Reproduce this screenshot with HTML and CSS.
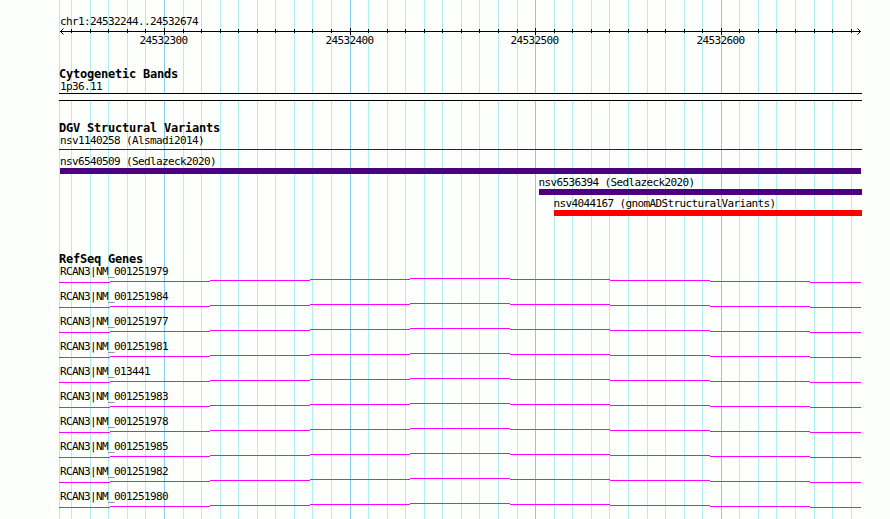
FILE: index.html
```
<!DOCTYPE html>
<html lang="en">
<head>
    <meta charset="UTF-8">
    <meta name="viewport" content="width=device-width, initial-scale=1.0">
    <title>chr1:24532244..24532674</title>
    <link rel="stylesheet" href="styles.css">
</head>
<body>

    <div class="panel">
        <svg class="grid" width="803" height="519" shape-rendering="crispEdges">
            <path class="minor" d="M.5 0v519M12.5 0v519M31.5 0v519M49.5 0v519M68.5 0v519M86.5 0v519M124.5 0v519M142.5 0v519M161.5 0v519M179.5 0v519M198.5 0v519M216.5 0v519M235.5 0v519M253.5 0v519M272.5 0v519M309.5 0v519M328.5 0v519M346.5 0v519M365.5 0v519M383.5 0v519M402.5 0v519M420.5 0v519M439.5 0v519M458.5 0v519M495.5 0v519M513.5 0v519M532.5 0v519M550.5 0v519M569.5 0v519M588.5 0v519M606.5 0v519M625.5 0v519M643.5 0v519M680.5 0v519M699.5 0v519M717.5 0v519M736.5 0v519M755.5 0v519M773.5 0v519M792.5 0v519"/>
            <path class="major" d="M105.5 0v519M291.5 0v519M476.5 0v519M662.5 0v519"/>
        </svg>

        <div class="ruler">
            <div class="label">chr1:24532244..24532674</div>
            <svg class="scale" width="803" height="20">
                <g shape-rendering="crispEdges">
                    <path d="M1 4.5h801"/>
                    <path d="M12.5 2v4M31.5 2v4M49.5 2v4M68.5 2v4M86.5 2v4M124.5 2v4M142.5 2v4M161.5 2v4M179.5 2v4M198.5 2v4M216.5 2v4M235.5 2v4M253.5 2v4M272.5 2v4M309.5 2v4M328.5 2v4M346.5 2v4M365.5 2v4M383.5 2v4M402.5 2v4M420.5 2v4M439.5 2v4M458.5 2v4M495.5 2v4M513.5 2v4M532.5 2v4M550.5 2v4M569.5 2v4M588.5 2v4M606.5 2v4M625.5 2v4M643.5 2v4M680.5 2v4M699.5 2v4M717.5 2v4M736.5 2v4M755.5 2v4M773.5 2v4M792.5 2v4"/>
                    <path d="M105.5 1v7M291.5 1v7M476.5 1v7M662.5 1v7"/>
                </g>
                <path d="M4.5 1.5l-3 3 3 3M798.5 1.5l3 3-3 3"/>
                <text x="80.5" y="17">24532300</text>
                <text x="266.5" y="17">24532400</text>
                <text x="451.5" y="17">24532500</text>
                <text x="637.5" y="17">24532600</text>
            </svg>
        </div>

        <div class="track cytobands">
            <h2>Cytogenetic Bands</h2>
            <div class="label">1p36.11</div>
            <div class="band"></div>
        </div>

        <div class="track variants">
            <h2>DGV Structural Variants</h2>
            <div class="variant thin">
                <div class="label">nsv1140258 (Alsmadi2014)</div>
                <div class="bar"></div>
            </div>
            <div class="variant full">
                <div class="label">nsv6540509 (Sedlazeck2020)</div>
                <div class="bar"></div>
            </div>
            <div class="variant gain">
                <div class="label">nsv6536394 (Sedlazeck2020)</div>
                <div class="bar"></div>
            </div>
            <div class="variant loss">
                <div class="label">nsv4044167 (gnomADStructuralVariants)</div>
                <div class="bar"></div>
            </div>
        </div>

        <div class="track genes">
            <h2>RefSeq Genes</h2>
            <div class="gene">
                <div class="label">RCAN3|NM_001251979</div>
                <svg width="803" height="5"><path id="intron" shape-rendering="crispEdges" d="M0 4.5h51M51 3.5h100M151 2.5h100M251 1.5h100M351 .5h100M451 1.5h100M551 2.5h100M651 3.5h100M751 4.5h51"/></svg>
            </div>
            <div class="gene">
                <div class="label">RCAN3|NM_001251984</div>
                <svg width="803" height="5"><use href="#intron"/></svg>
            </div>
            <div class="gene">
                <div class="label">RCAN3|NM_001251977</div>
                <svg width="803" height="5"><use href="#intron"/></svg>
            </div>
            <div class="gene">
                <div class="label">RCAN3|NM_001251981</div>
                <svg width="803" height="5"><use href="#intron"/></svg>
            </div>
            <div class="gene">
                <div class="label">RCAN3|NM_013441</div>
                <svg width="803" height="5"><use href="#intron"/></svg>
            </div>
            <div class="gene">
                <div class="label">RCAN3|NM_001251983</div>
                <svg width="803" height="5"><use href="#intron"/></svg>
            </div>
            <div class="gene">
                <div class="label">RCAN3|NM_001251978</div>
                <svg width="803" height="5"><use href="#intron"/></svg>
            </div>
            <div class="gene">
                <div class="label">RCAN3|NM_001251985</div>
                <svg width="803" height="5"><use href="#intron"/></svg>
            </div>
            <div class="gene">
                <div class="label">RCAN3|NM_001251982</div>
                <svg width="803" height="5"><use href="#intron"/></svg>
            </div>
            <div class="gene">
                <div class="label">RCAN3|NM_001251980</div>
                <svg width="803" height="5"><use href="#intron"/></svg>
            </div>
        </div>
    </div>

</body>
</html>
```
FILE: styles.css
```
* {
    margin: 0;
    padding: 0;
    box-sizing: border-box;
}

body {
    height: 519px;
    overflow: hidden;
    background-color: #fdfffc;
    color: #000;
    font-family: 'DejaVu Sans Mono', monospace;
}

svg {
    display: block;
    fill: none;
    stroke: #000;
}

.panel {
    position: relative;
    width: 803px;
    height: 519px;
    margin-left: 59px;
    padding-top: 15px;
}

/* guide lines behind all tracks */
.grid {
    position: absolute;
    top: 0;
    left: 0;
    z-index: -1;
}

.minor {
    stroke: #afeeee;
}

.major {
    stroke: #87ceeb;
}

.label,
.scale text {
    font-size: 11px;
    line-height: 12px;
    letter-spacing: -0.623px;
    white-space: nowrap;
}

.label {
    height: 12px;
    padding-top: 1px;
    padding-left: 1px;
}

.scale text {
    fill: #000;
    stroke: none;
}

h2 {
    height: 12px;
    font-size: 12px;
    line-height: 12px;
    letter-spacing: -0.225px;
    white-space: nowrap;
}

.cytobands {
    margin-top: 21px;
}

.band {
    height: 8px;
    margin-top: 1px;
    border-top: 1px solid #000;
    border-bottom: 1px solid #000;
    background-color: #fdfffc;
}

.variants {
    margin-top: 21px;
}

.variant {
    height: 21px;
}

.bar {
    height: 6px;
    margin-top: 1px;
    background-color: #4b0082;
}

.thin .bar {
    height: 1px;
    margin-top: 3px;
}

.full .bar {
    margin-left: 1px;
    margin-right: 1px;
}

.gain {
    margin-left: 479px;
}

.gain .label,
.loss .label {
    padding-left: 0.5px;
}

.gain .bar,
.loss .bar {
    margin-left: 1px;
}

.loss {
    margin-left: 494px;
}

.loss .bar {
    background-color: #f00;
}

.genes {
    margin-top: 35px;
}

.gene {
    height: 25px;
}

.gene svg {
    margin-top: 1px;
    stroke: #f0f;
}
```
